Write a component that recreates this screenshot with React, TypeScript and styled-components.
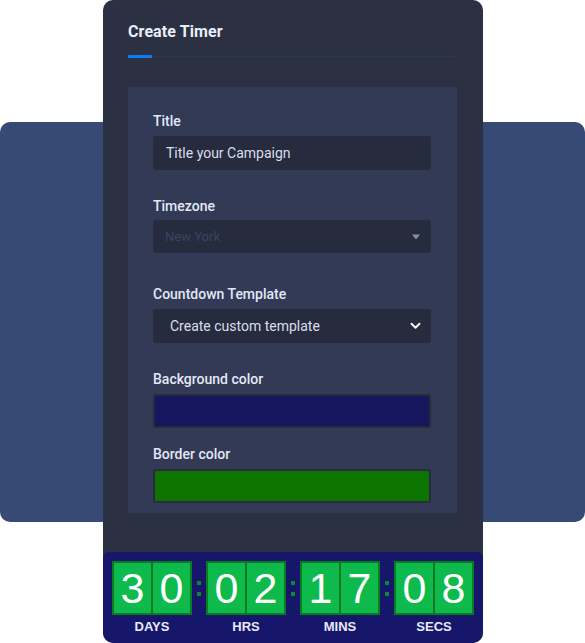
import React from "react";
import styled, { createGlobalStyle } from "styled-components";

const Global = createGlobalStyle`
  html, body { margin: 0; padding: 0; background: #ffffff; }
  body { font-family: Roboto, "Liberation Sans", sans-serif; }
  * { box-sizing: border-box; }
`;

const Stage = styled.div`
  display: grid;
  width: 585px;
  height: 643px;
  overflow: hidden;
`;

const Backdrop = styled.div`
  grid-area: 1 / 1;
  align-self: start;
  margin-top: 122px;
  height: 400px;
  width: 585px;
  background: #374a75;
  border-radius: 10px;
`;

const Panel = styled.section`
  grid-area: 1 / 1;
  justify-self: start;
  margin-left: 103px;
  width: 380px;
  height: 643px;
  background: #2b3042;
  border-radius: 10px;
  display: flex;
  flex-direction: column;
  overflow: hidden;
`;

const Header = styled.header`
  padding: 23px 26px 0 25px;
`;

const Heading = styled.h2`
  margin: 0;
  font-family: Roboto, "Liberation Sans", sans-serif;
  font-weight: 700;
  font-size: 16px;
  line-height: 18px;
  color: #e9eefb;
  letter-spacing: 0.1px;
`;

const TabLine = styled.div`
  margin-top: 14px;
  height: 3px;
  display: flex;
  align-items: center;
  background: linear-gradient(#2f3649, #2f3649) 0 1px / 100% 1px no-repeat;
`;

const ActiveTab = styled.span`
  width: 24px;
  height: 3px;
  background: #0b7dfb;
  border-radius: 1px;
`;

const Card = styled.div`
  margin: 29px 26px 0 25px;
  background: #323a56;
  padding: 25px 26px 10px 25px;
  display: flex;
  flex-direction: column;
`;

const Field = styled.div<{ $space: number }>`
  margin-top: ${(p) => p.$space}px;
  display: flex;
  flex-direction: column;
`;

const Label = styled.label<{ $tight?: boolean }>`
  font-size: 14px;
  line-height: 18px;
  color: #e3e8f7;
  font-weight: 500;
  margin-bottom: ${(p) => (p.$tight ? 5 : 6)}px;
`;

const TextInput = styled.div`
  height: 34px;
  border-radius: 3px;
  background: #262b3d;
  color: #d9deec;
  font-size: 14px;
  padding: 0 13px;
  display: flex;
  align-items: center;
`;

const SelectBox = styled.div<{ $muted?: boolean; $pad: number; $h: number }>`
  height: ${(p) => p.$h}px;
  border-radius: 3px;
  background: #262b3d;
  color: ${(p) => (p.$muted ? "#3c4360" : "#d9deec")};
  font-size: ${(p) => (p.$muted ? "13px" : "14px")};
  padding: 0 10px 0 ${(p) => p.$pad}px;
  display: flex;
  align-items: center;
  justify-content: space-between;
`;

const Swatch = styled.div<{ $color: string }>`
  height: 34px;
  border-radius: 3px;
  background: #262b3d;
  padding: 2px;
  &::after {
    content: "";
    display: block;
    height: 100%;
    background: ${(p) => p.$color};
  }
`;

const Spacer = styled.div`
  flex: 1;
`;

const Timer = styled.div`
  height: 91px;
  background: #16166a;
  border-radius: 6px 6px 10px 10px;
  padding: 9px 0 0 9px;
  display: flex;
  align-items: flex-start;
`;

const Unit = styled.div`
  display: flex;
  flex-direction: column;
  align-items: center;
`;

const Digits = styled.div`
  display: flex;
`;

const Cell = styled.span`
  width: 40px;
  height: 54px;
  background: #0dba4b;
  border: 2px solid #0b7b22;
  color: #ffffff;
  font-family: "Liberation Sans", Arial, sans-serif;
  font-size: 43px;
  line-height: 50px;
  text-align: center;
  & + & {
    border-left-width: 1px;
  }
  &:first-child {
    border-right-width: 1px;
  }
`;

const UnitLabel = styled.span`
  margin-top: 4px;
  font-family: "Liberation Sans", Arial, sans-serif;
  font-weight: 700;
  font-size: 13px;
  line-height: 16px;
  color: #e8eaf6;
`;

const Colon = styled.span`
  width: 14px;
  height: 54px;
  display: flex;
  flex-direction: column;
  align-items: center;
  justify-content: center;
  gap: 7px;
  &::before,
  &::after {
    content: "";
    width: 4px;
    height: 4px;
    background: #0a8a2c;
  }
`;

const Caret = () => (
  <svg width="10" height="6" viewBox="0 0 10 6">
    <path d="M1 0.5h8L5 5.5z" fill="#8a8ea0" />
  </svg>
);

const Chevron = () => (
  <svg width="11" height="8" viewBox="0 0 11 8">
    <path d="M1.5 1.8l4 4 4-4" fill="none" stroke="#f2f4fa" strokeWidth="2" strokeLinecap="round" strokeLinejoin="round" />
  </svg>
);

const units: { value: string; label: string }[] = [
  { value: "30", label: "DAYS" },
  { value: "02", label: "HRS" },
  { value: "17", label: "MINS" },
  { value: "08", label: "SECS" },
];

export default function App() {
  return (
    <>
      <Global />
      <Stage>
        <Backdrop />
        <Panel>
          <Header>
            <Heading>Create Timer</Heading>
            <TabLine>
              <ActiveTab />
            </TabLine>
          </Header>
          <Card>
            <Field $space={0}>
              <Label>Title</Label>
              <TextInput>Title your Campaign</TextInput>
            </Field>
            <Field $space={27}>
              <Label $tight>Timezone</Label>
              <SelectBox $muted $pad={12} $h={33}>
                New York
                <Caret />
              </SelectBox>
            </Field>
            <Field $space={32}>
              <Label>Countdown Template</Label>
              <SelectBox $pad={17} $h={34}>
                Create custom template
                <Chevron />
              </SelectBox>
            </Field>
            <Field $space={27}>
              <Label>Background color</Label>
              <Swatch $color="#16165f" />
            </Field>
            <Field $space={17}>
              <Label>Border color</Label>
              <Swatch $color="#0e7400" />
            </Field>
          </Card>
          <Spacer />
          <Timer>
            {units.map((u, i) => (
              <React.Fragment key={u.label}>
                {i > 0 && <Colon />}
                <Unit>
                  <Digits>
                    <Cell>{u.value[0]}</Cell>
                    <Cell>{u.value[1]}</Cell>
                  </Digits>
                  <UnitLabel>{u.label}</UnitLabel>
                </Unit>
              </React.Fragment>
            ))}
          </Timer>
        </Panel>
      </Stage>
    </>
  );
}
